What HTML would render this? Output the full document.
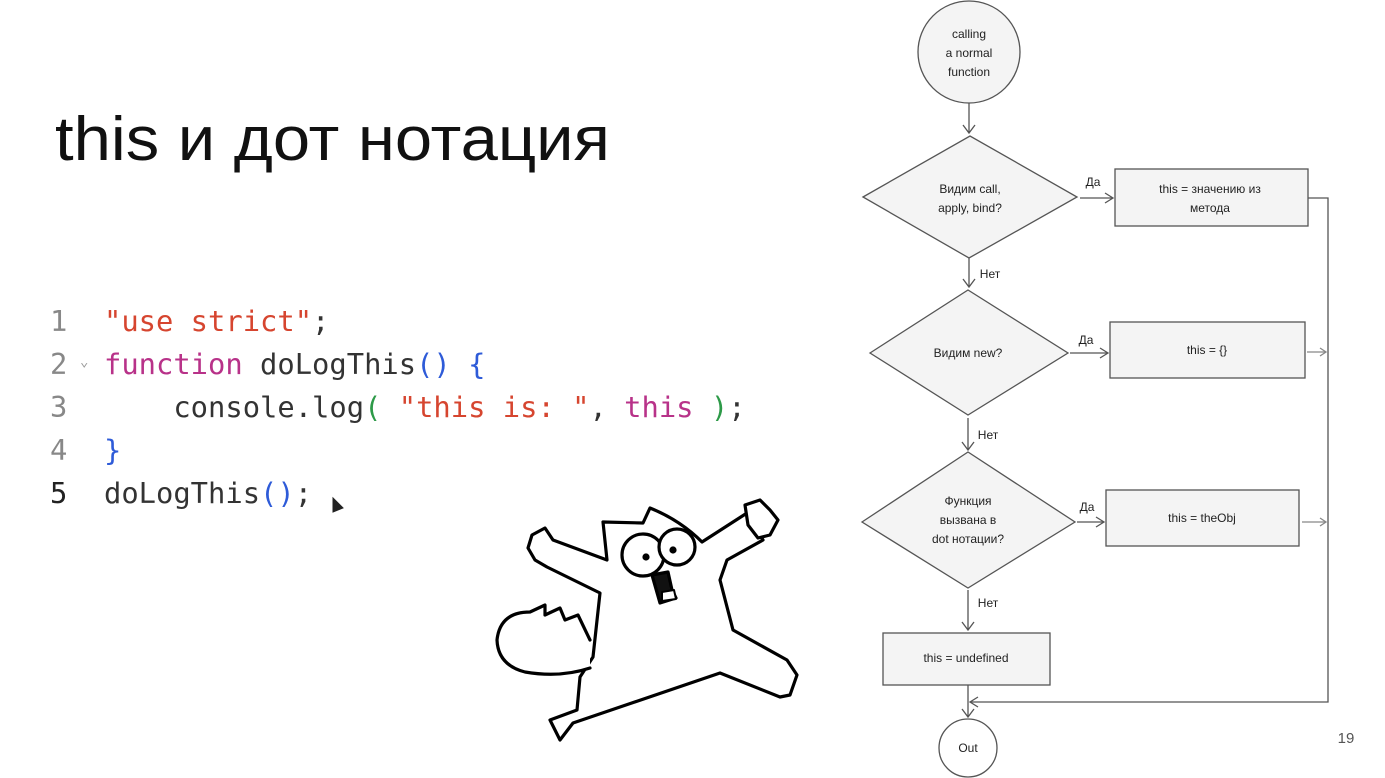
<!DOCTYPE html>
<html><head><meta charset="utf-8"><style>
body{margin:0;width:1385px;height:778px;background:#fff;overflow:hidden;position:relative;font-family:"Liberation Sans",sans-serif}
.t{position:absolute;left:55px;top:104px;font-size:62px;color:#111;letter-spacing:0px;transform:scaleX(1.08);transform-origin:left}
.code{position:absolute;left:0;top:300px;font-family:"DejaVu Sans Mono","Liberation Mono",monospace;font-size:28.8px;line-height:43px;color:#333}
.ln{position:absolute;left:50px;color:#888}
.c{position:absolute;left:104px;white-space:pre}
.s{color:#d6452f}.k{color:#b83289}.b{color:#2e5bd8}.g{color:#2d9a48}
</style></head><body>
<div class="t">this и дот нотация</div>
<div class="code">
<div class="ln" style="top:0">1</div><div class="c" style="top:0"><span class="s">"use strict"</span>;</div>
<div class="ln" style="top:43px">2</div><div style="position:absolute;left:80px;top:41px;font-size:14px;color:#999">⌄</div><div class="c" style="top:43px"><span class="k">function</span> doLogThis<span class="b">()</span> <span class="b">{</span></div>
<div class="ln" style="top:86px">3</div><div class="c" style="top:86px">    console.log<span class="g">(</span> <span class="s">"this is: "</span>, <span class="k">this</span> <span class="g">)</span>;</div>
<div class="ln" style="top:129px">4</div><div class="c" style="top:129px"><span class="b">}</span></div>
<div class="ln" style="top:172px;color:#222">5</div><div class="c" style="top:172px">doLogThis<span class="b">()</span>;</div>
</div>
<svg width="1385" height="778" style="position:absolute;left:0;top:0" font-family="Liberation Sans, sans-serif" font-size="12" fill="none" stroke="#555" stroke-width="1.3">
<path d="M333 498 L333 512 L343 508 Z" fill="#222" stroke="#222" stroke-width="1"/>
<g stroke="#000" stroke-width="3.2" stroke-linejoin="round" stroke-linecap="round" fill="#fff">
<path d="M553 540 L607 560 L603 522 L643 523 L650 508 Q680 520 702 542 L747 513 L763 540 L727 560 L720 580 L733 630 L787 660 L797 675 L790 695 L780 697 L720 673 L620 707 L573 723 L560 740 L550 720 L577 710 L580 677 L593 657 L600 593 L547 567 L535 560 L528 548 L532 535 L545 528 Z"/>
<path d="M590 668 Q560 678 525 672 Q498 665 497 640 Q500 612 530 612 L545 605 L545 615 L560 608 L565 620 L578 615 L590 640"/>
<path d="M745 505 L760 500 L770 510 L778 520 L770 535 L758 538 L748 525 Z"/>
<circle cx="643" cy="555" r="21"/><circle cx="677" cy="547" r="18"/>
<circle cx="646" cy="557" r="2" fill="#000"/><circle cx="673" cy="550" r="2" fill="#000"/>
<path d="M652 575 L668 572 L672 590 L676 598 L660 603 Z" fill="#111"/>
<path d="M662 592 L674 590 L676 599 L662 601 Z" fill="#fff" stroke-width="2"/>
</g>
<g fill="#f4f4f4">
<circle cx="969" cy="52" r="51"/>
<path d="M863 197 L970 136 L1077 197 L969 258 Z"/>
<rect x="1115" y="169" width="193" height="57"/>
<path d="M870 353 L968 290 L1068 353 L968 415 Z"/>
<rect x="1110" y="322" width="195" height="56"/>
<path d="M862 522 L968 452 L1075 522 L968 588 Z"/>
<rect x="1106" y="490" width="193" height="56"/>
<rect x="883" y="633" width="167" height="52"/>
</g>
<circle cx="968" cy="748" r="29" fill="#fff"/>
<path d="M969 103 V133 M963 125 L969 133 L975 125"/>
<path d="M1080 198 H1113 M1105 193 L1113 198 L1105 203"/>
<path d="M969 258 V287 M963 279 L969 287 L975 279"/>
<path d="M1070 353 H1108 M1100 348 L1108 353 L1100 358"/>
<path d="M968 418 V450 M962 442 L968 450 L974 442"/>
<path d="M1077 522 H1104 M1096 517 L1104 522 L1096 527"/>
<path d="M968 590 V630 M962 622 L968 630 L974 622"/>
<path d="M968 685 V717 M962 709 L968 717 L974 709"/>
<path d="M1308 198 H1328 V702 H970 M978 697 L970 702 L978 707"/>
<path d="M1307 352 H1326 M1320 348 L1326 352 L1320 356 M1302 522 H1326 M1320 518 L1326 522 L1320 526" stroke="#888"/>
<g fill="#222" stroke="none" text-anchor="middle">
<text x="969" y="38">calling</text><text x="969" y="57">a normal</text><text x="969" y="76">function</text>
<text x="970" y="193">Видим call,</text><text x="970" y="212">apply, bind?</text>
<text x="1210" y="193">this = значению из</text><text x="1210" y="212">метода</text>
<text x="968" y="357">Видим new?</text>
<text x="1207" y="354">this = {}</text>
<text x="968" y="505">Функция</text><text x="968" y="524">вызвана в</text><text x="968" y="543">dot нотации?</text>
<text x="1202" y="522">this = theObj</text>
<text x="966" y="662">this = undefined</text>
<text x="968" y="752">Out</text>
<text x="1093" y="186">Да</text><text x="1086" y="344">Да</text><text x="1087" y="511">Да</text>
<text x="990" y="278">Нет</text><text x="988" y="439">Нет</text><text x="988" y="607">Нет</text>
<text x="1346" y="743" font-size="15" fill="#555">19</text>
</g>
</svg>
</body></html>
